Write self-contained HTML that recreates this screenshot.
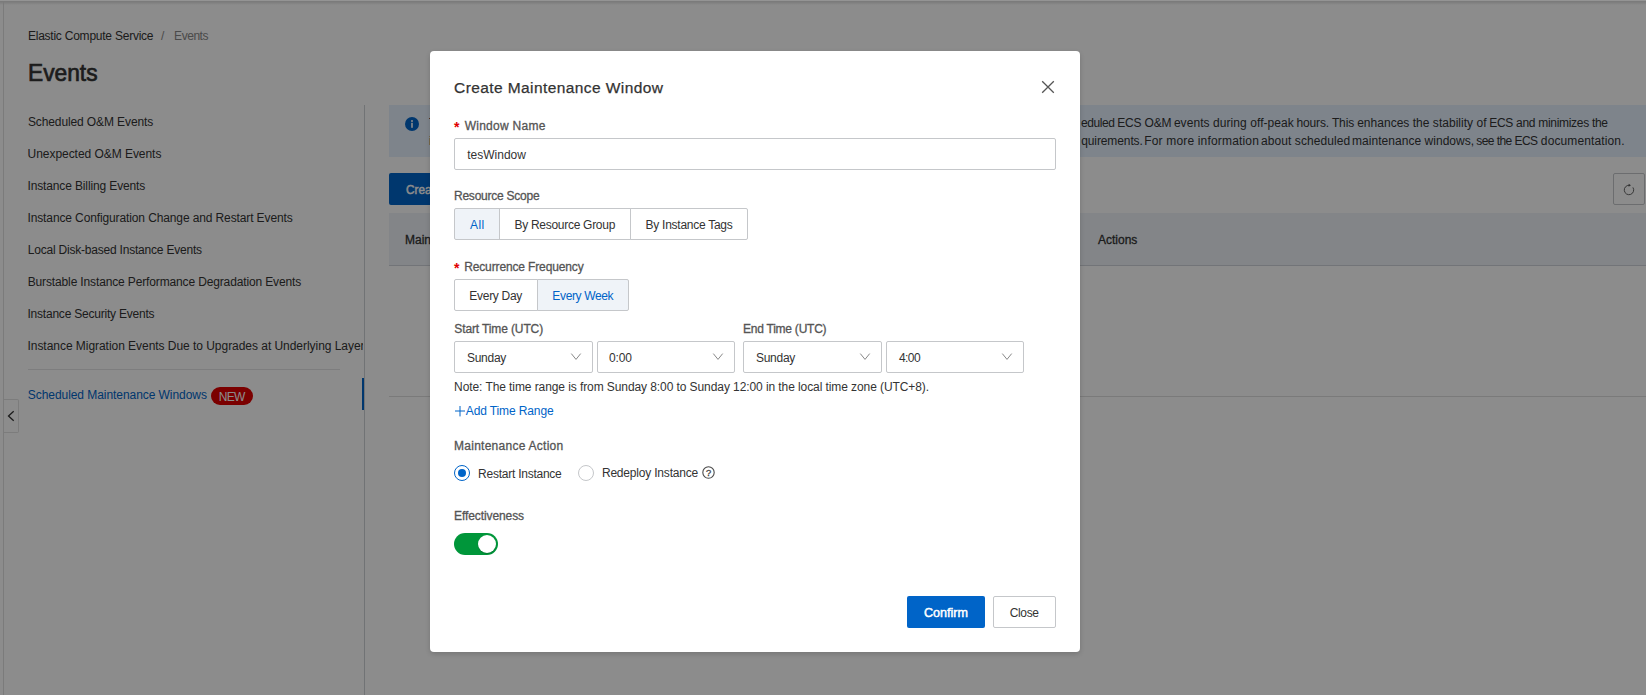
<!DOCTYPE html>
<html lang="en">
<head>
<meta charset="utf-8">
<title>Events - Elastic Compute Service</title>
<style>
*{box-sizing:border-box;margin:0;padding:0}
html,body{width:1646px;height:695px;overflow:hidden;background:#fff}
body{font-family:"Liberation Sans",sans-serif;font-size:12px;color:#333;position:relative}
.abs{position:absolute;white-space:nowrap}
.t{position:absolute;white-space:nowrap;line-height:16px;height:16px}
/* ---------- background page ---------- */
#page{position:absolute;left:0;top:0;width:1646px;height:695px;background:#fff;z-index:0}
#topshadow{position:absolute;left:0;top:0;width:1646px;height:5px;background:linear-gradient(#fff 0,#fff 1px,#dcdcdc 1px,#ececec 3px,#fff 5px)}
#leftline{z-index:2;position:absolute;left:3px;top:1px;width:1px;height:694px;background:#e0e0e0}
#handle{position:absolute;left:3px;top:399px;width:16px;height:34px;border:1px solid #e2e2e2;border-left:none;border-radius:0 2px 2px 0;background:#fff}
.nav .t{left:28px;color:#333}
#sep{position:absolute;left:28px;top:369px;width:312px;height:1px;background:#e3e4e6}
#vline{position:absolute;left:364px;top:105px;width:1px;height:590px;background:#ced1d5}
#activebar{position:absolute;left:362px;top:378px;width:2px;height:32px;background:#0064c8}
#badge{position:absolute;left:211px;top:387px;width:42px;height:18px;border-radius:9px;background:#e00000;color:#fff;text-align:center;line-height:20px;font-size:12px}
#banner{position:absolute;left:389px;top:105px;width:1257px;height:52px;background:#e5f0fe}
#createbtn{position:absolute;left:389px;top:173px;width:120px;height:32px;background:#0064c8;border-radius:2px;color:#fff}
#refresh{position:absolute;left:1613px;top:173px;width:32px;height:32px;border:1px solid #c5c7ca;border-radius:2px;background:#fff}
#thead{position:absolute;left:389px;top:213px;width:1257px;height:53px;background:#eff3f8;border-bottom:1px solid #d0d4da}
#tline{position:absolute;left:389px;top:396px;width:1257px;height:1px;background:#dedede}
#mask{position:absolute;left:0;top:0;width:1646px;height:695px;background:rgba(0,0,0,0.45)}
/* ---------- modal ---------- */
#modal{position:absolute;left:430px;top:51px;width:650px;height:601px;background:#fff;border-radius:4px;box-shadow:0 2px 5px rgba(0,0,0,0.16)}
#modal .t{color:#333}
#modal .lbl{color:#555;-webkit-text-stroke:0.3px #555}
.red{color:#e00000 !important;font-size:14px;font-weight:bold}
.box{position:absolute;border:1px solid #c5c7ca;border-radius:2px;background:#fff}
.seg{position:absolute;top:0;height:32px;border:1px solid #c5c7ca;background:#fff}
.seg.on{background:#eff3f8}
.blue{color:#0064c8 !important}
</style>
</head>
<body>
<div id="page">
  <div id="topshadow"></div>
  <div id="leftline"></div>
  <div id="handle"><svg class="abs" style="left:0;top:0" width="15" height="32" viewBox="0 0 15 32"><path d="M10.7 11.3 L5.5 16 L10.7 20.7" fill="none" stroke="#333" stroke-width="1.3"/></svg></div>

  <div class="t" id="bc1" style="margin-left:-0.08px;letter-spacing:-0.232px;left:28px;top:28px;color:#333">Elastic Compute Service</div>
  <div class="t" id="bc2" style="left:161px;top:28px;color:#888">/</div>
  <div class="t" id="bc3" style="margin-left:0.12px;letter-spacing:-0.469px;left:174px;top:28px;color:#888">Events</div>
  <div class="t" id="h1" style="margin-left:0.24px;transform-origin:0 0;transform:scaleX(0.9474);left:28px;top:58px;font-size:24px;line-height:30px;height:30px;-webkit-text-stroke:0.7px #333;color:#333">Events</div>

  <div class="nav">
    <div class="t" id="n1" style="margin-left:-0.12px;letter-spacing:-0.107px;top:114px">Scheduled O&amp;M Events</div>
    <div class="t" id="n2" style="margin-left:-0.43px;letter-spacing:-0.046px;top:146px">Unexpected O&amp;M Events</div>
    <div class="t" id="n3" style="margin-left:-0.54px;letter-spacing:-0.133px;top:178px">Instance Billing Events</div>
    <div class="t" id="n4" style="margin-left:-0.54px;letter-spacing:-0.119px;top:210px">Instance Configuration Change and Restart Events</div>
    <div class="t" id="n5" style="margin-left:-0.29px;letter-spacing:-0.206px;top:242px">Local Disk-based Instance Events</div>
    <div class="t" id="n6" style="margin-left:-0.29px;letter-spacing:-0.139px;top:274px">Burstable Instance Performance Degradation Events</div>
    <div class="t" id="n7" style="margin-left:-0.54px;letter-spacing:-0.214px;top:306px">Instance Security Events</div>
    <div class="t" id="n8" style="margin-left:-0.54px;letter-spacing:-0.04px;top:338px;width:336px;overflow:hidden">Instance Migration Events Due to Upgrades at Underlying Layer</div>
    <div id="sep"></div>
    <div class="t blue" id="n9" style="margin-left:-0.19px;letter-spacing:-0.061px;top:387px">Scheduled Maintenance Windows</div>
    <div id="badge"><span id="badgetxt" style="margin-left:-0.71px;letter-spacing:-0.737px;position:relative">NEW</span></div>
  </div>
  <div id="vline"></div>
  <div id="activebar"></div>

  <div id="banner">
    <svg class="abs" style="left:16px;top:12px" width="14" height="14" viewBox="0 0 14 14"><circle cx="7" cy="7" r="7" fill="#0064c8"/><rect x="6.2" y="5.8" width="1.6" height="5" fill="#fff"/><circle cx="7" cy="3.9" r="1" fill="#fff"/></svg>
    <div class="t" id="b1h" style="left:40px;width:652px;overflow:hidden;top:9px;line-height:18px;height:18px">The scheduled maintenance window feature allows you to specify custom time periods so that the system handles sch</div>
    <div class="t" id="b1a" style="margin-left:-0.33px;letter-spacing:-0.41px;left:692.3px;top:9px;line-height:18px;height:18px">eduled</div>
    <div class="t" id="b1b" style="margin-left:-0.46px;letter-spacing:-0.185px;left:728.7px;top:9px;line-height:18px;height:18px">ECS O&amp;M</div>
    <div class="t" id="b1c" style="margin-left:-0.03px;letter-spacing:0.068px;left:784.9px;top:9px;line-height:18px;height:18px">events during off-peak</div>
    <div class="t" id="b1d" style="margin-left:-0.4px;letter-spacing:-0.148px;left:907.9px;top:9px;line-height:18px;height:18px">hours. This</div>
    <div class="t" id="b1e" style="margin-left:0.06px;letter-spacing:0.026px;left:968.1px;top:9px;line-height:18px;height:18px">enhances the stability of</div>
    <div class="t" id="b1f" style="margin-left:-0.46px;letter-spacing:-0.296px;left:1100.7px;top:9px;line-height:18px;height:18px">ECS and minimizes the</div>
    <div class="t" id="b2h" style="left:40px;width:652px;overflow:hidden;top:27px;line-height:18px;height:18px">impact on your business. You can configure one or more maintenance windows based on your actual business re</div>
    <div class="t" id="b2a" style="margin-left:-0.12px;letter-spacing:-0.103px;left:692.3px;top:27px;line-height:18px;height:18px">quirements.</div>
    <div class="t" id="b2b" style="margin-left:-0.84px;letter-spacing:0.168px;left:756.1px;top:27px;line-height:18px;height:18px">For more information</div>
    <div class="t" id="b2c" style="margin-left:-0.38px;letter-spacing:0.078px;left:872.4px;top:27px;line-height:18px;height:18px">about scheduled</div>
    <div class="t" id="b2d" style="margin-left:-0.5px;letter-spacing:0.033px;left:963.6px;top:27px;line-height:18px;height:18px">maintenance windows,</div>
    <div class="t" id="b2e" style="margin-left:-0.3px;letter-spacing:-0.566px;left:1087.6px;top:27px;line-height:18px;height:18px">see the ECS</div>
    <div class="t" id="b2f" style="margin-left:0.06px;letter-spacing:0.121px;left:1151.8px;top:27px;line-height:18px;height:18px">documentation.</div>
  </div>
  <div id="createbtn"><div class="t" id="cb" style="transform:scaleX(0.98);transform-origin:left top;left:17px;top:9px;color:#fff;-webkit-text-stroke:0.45px #fff">Create Maintenance Window</div></div>
  <div id="refresh"><svg class="abs" style="left:9px;top:9px" width="12" height="13" viewBox="0 0 12 13"><path d="M9.9 4.4 A4.7 4.7 0 1 1 6.3 2.3" fill="none" stroke="#555" stroke-width="0.9"/><path d="M5.6 0.7 L8 2.3 L5.6 3.8 Z" fill="#555"/></svg></div>
  <div id="thead">
    <div class="t" id="th1" style="left:16px;top:19px;-webkit-text-stroke:0.3px #333">Maintenance Window</div>
    <div class="t" id="th2" style="margin-left:0.95px;letter-spacing:0.01px;left:708px;top:19px;-webkit-text-stroke:0.3px #333">Actions</div>
  </div>
  <div id="tline"></div>
</div>
<div id="mask"></div>
<div style="position:absolute;left:0;top:0;width:1646px;height:1px;background:#949494"></div>

<div id="modal">
  <div class="t" id="mt" style="margin-left:0.06px;letter-spacing:0.411px;left:24px;top:26px;font-size:15.5px;line-height:22px;height:22px;-webkit-text-stroke:0.25px #333;color:#333">Create Maintenance Window</div>
  <svg class="abs" style="left:610px;top:28px" width="16" height="16" viewBox="0 0 16 16"><path d="M2.2 2.2 L13.8 13.8 M13.8 2.2 L2.2 13.8" stroke="#555" stroke-width="1.3" fill="none"/></svg>

  <div class="t red" id="a1" style="left:24px;top:68px">*</div>
  <div class="t lbl" id="l1" style="margin-left:0.63px;letter-spacing:0.269px;left:34px;top:67px">Window Name</div>
  <div class="box" style="left:24px;top:87px;width:602px;height:32px"><div class="t" id="i1" style="margin-left:0.31px;letter-spacing:-0.01px;left:12px;top:8px">tesWindow</div></div>

  <div class="t lbl" id="l2" style="margin-left:0px;letter-spacing:-0.236px;left:24px;top:137px">Resource Scope</div>
  <div class="abs" style="left:24px;top:157px;height:32px">
    <div class="seg on" style="left:0;width:46px;border-radius:2px 0 0 2px"><div class="t blue" id="s1" style="margin-left:0.01px;letter-spacing:0.398px;left:15px;top:8px">All</div></div>
    <div class="seg" style="left:45px;width:132px"><div class="t" id="s2" style="margin-left:-0.54px;letter-spacing:-0.283px;left:15px;top:8px">By Resource Group</div></div>
    <div class="seg" style="left:176px;width:118px;border-radius:0 2px 2px 0"><div class="t" id="s3" style="margin-left:-0.44px;letter-spacing:-0.263px;left:15px;top:8px">By Instance Tags</div></div>
  </div>

  <div class="t red" id="a2" style="left:24px;top:209px">*</div>
  <div class="t lbl" id="l3" style="margin-left:0.2px;letter-spacing:-0.136px;left:34px;top:208px">Recurrence Frequency</div>
  <div class="abs" style="left:24px;top:228px;height:32px">
    <div class="seg" style="left:0;width:84px;border-radius:2px 0 0 2px"><div class="t" id="s4" style="margin-left:-0.67px;letter-spacing:-0.29px;left:15px;top:8px">Every Day</div></div>
    <div class="seg on" style="left:83px;width:92px;border-radius:0 2px 2px 0"><div class="t blue" id="s5" style="margin-left:-0.67px;letter-spacing:-0.356px;left:15px;top:8px">Every Week</div></div>
  </div>

  <div class="t lbl" id="l4" style="margin-left:0.31px;letter-spacing:-0.12px;left:24px;top:270px">Start Time (UTC)</div>
  <div class="t lbl" id="l5" style="margin-left:0.01px;letter-spacing:-0.239px;left:313px;top:270px">End Time (UTC)</div>
  <div class="box" style="left:24px;top:290px;width:139px;height:32px"><div class="t" id="d1" style="margin-left:-0.04px;letter-spacing:-0.273px;left:12px;top:8px">Sunday</div><svg class="abs" style="left:115px;top:10px" width="12" height="10" viewBox="0 0 12 10"><path d="M1.3 1.6 L6 7.4 L10.7 1.6" fill="none" stroke="#888" stroke-width="1"/></svg></div>
  <div class="box" style="left:167px;top:290px;width:138px;height:32px"><div class="t" id="d2" style="margin-left:-0.92px;letter-spacing:-0.194px;left:12px;top:8px">0:00</div><svg class="abs" style="left:114px;top:10px" width="12" height="10" viewBox="0 0 12 10"><path d="M1.3 1.6 L6 7.4 L10.7 1.6" fill="none" stroke="#888" stroke-width="1"/></svg></div>
  <div class="box" style="left:313px;top:290px;width:139px;height:32px"><div class="t" id="d3" style="margin-left:-0.04px;letter-spacing:-0.273px;left:12px;top:8px">Sunday</div><svg class="abs" style="left:115px;top:10px" width="12" height="10" viewBox="0 0 12 10"><path d="M1.3 1.6 L6 7.4 L10.7 1.6" fill="none" stroke="#888" stroke-width="1"/></svg></div>
  <div class="box" style="left:456px;top:290px;width:138px;height:32px"><div class="t" id="d4" style="margin-left:-0.08px;letter-spacing:-0.552px;left:12px;top:8px">4:00</div><svg class="abs" style="left:114px;top:10px" width="12" height="10" viewBox="0 0 12 10"><path d="M1.3 1.6 L6 7.4 L10.7 1.6" fill="none" stroke="#888" stroke-width="1"/></svg></div>

  <div class="t" id="note" style="margin-left:0.12px;letter-spacing:-0.085px;left:24px;top:328px">Note: The time range is from Sunday 8:00 to Sunday 12:00 in the local time zone (UTC+8).</div>
  <svg class="abs" style="left:25px;top:354.5px" width="10" height="11" viewBox="0 0 10 11"><path d="M5 0 V10.4 M0 5 H10" stroke="#0064c8" stroke-width="1" fill="none"/></svg>
  <div class="t blue" id="add" style="margin-left:0.78px;letter-spacing:-0.117px;left:35px;top:352px">Add Time Range</div>

  <div class="t lbl" id="l6" style="margin-left:0px;letter-spacing:0.264px;left:24px;top:387px">Maintenance Action</div>
  <div class="abs" style="left:24px;top:414px;width:16px;height:16px;border:1px solid #0064c8;border-radius:50%;background:#fff"><div class="abs" style="left:3px;top:3px;width:8px;height:8px;border-radius:50%;background:#0064c8"></div></div>
  <div class="t" id="r1" style="margin-left:0.12px;letter-spacing:-0.247px;left:48px;top:415px">Restart Instance</div>
  <div class="abs" style="left:148px;top:414px;width:16px;height:16px;border:1px solid #c5c7ca;border-radius:50%;background:#fff"></div>
  <div class="t" id="r2" style="margin-left:-0.08px;letter-spacing:-0.194px;left:172px;top:414px">Redeploy Instance</div>
  <svg class="abs" style="left:271.8px;top:415px" width="13" height="13" viewBox="0 0 13 13"><circle cx="6.5" cy="6.5" r="5.7" fill="none" stroke="#4a4a4a" stroke-width="1.1"/><text x="6.5" y="9.8" font-family="Liberation Sans, sans-serif" font-size="9.4" text-anchor="middle" fill="#444" stroke="#444" stroke-width="0.3">?</text></svg>

  <div class="t lbl" id="l7" style="margin-left:0px;letter-spacing:-0.092px;left:24px;top:457px">Effectiveness</div>
  <div class="abs" style="left:24px;top:482px;width:44px;height:22px;border-radius:11px;background:#00963a"><div class="abs" style="left:24px;top:2px;width:18px;height:18px;border-radius:50%;background:#fff;box-shadow:0 1px 1px rgba(0,0,0,0.2)"></div></div>

  <div class="abs" style="left:477px;top:545px;width:78px;height:32px;border-radius:2px;background:#0064c8"><div class="t" id="ok" style="margin-left:0.45px;transform-origin:0 0;transform:scaleX(1.048);left:17px;top:9px;color:#fff;-webkit-text-stroke:0.45px #fff">Confirm</div></div>
  <div class="box" style="left:563px;top:545px;width:63px;height:32px"><div class="t" id="cl" style="margin-left:-0.24px;letter-spacing:-0.37px;left:16px;top:8px">Close</div></div>
</div>
</body>
</html>
